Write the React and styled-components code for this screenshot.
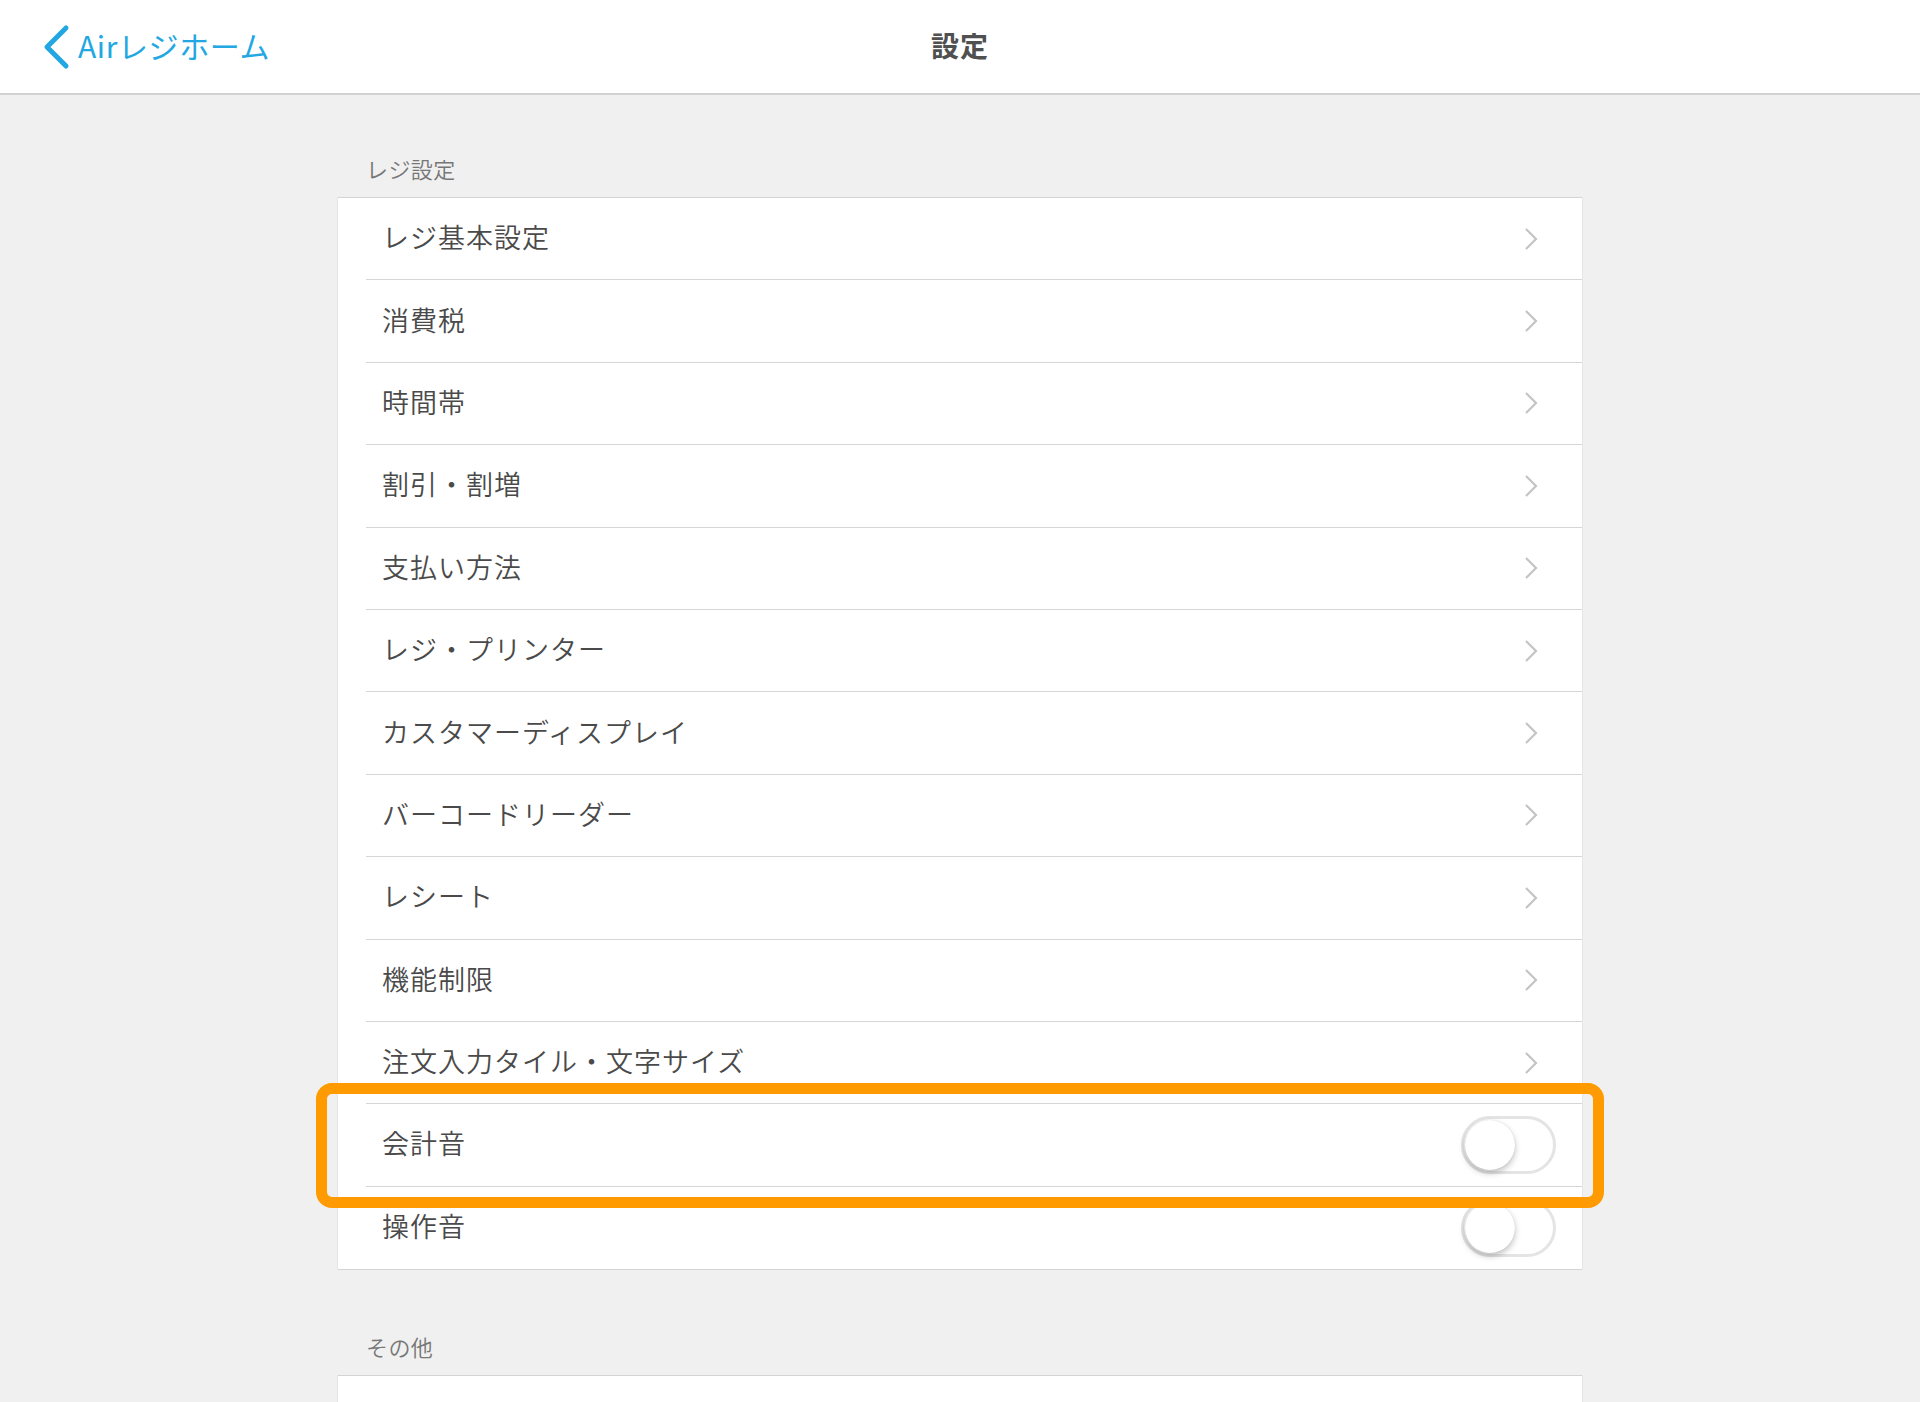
import styled, { createGlobalStyle } from "styled-components";

const GlobalStyle = createGlobalStyle`
  html, body {
    margin: 0;
    padding: 0;
    background: #f0f0f0;
    overflow: hidden;
  }
  body {
    font-family: "Noto Sans CJK JP", "Noto Sans", sans-serif;
  }
`;

const registerItems = [
  { label: "レジ基本設定" },
  { label: "消費税" },
  { label: "時間帯" },
  { label: "割引・割増" },
  { label: "支払い方法" },
  { label: "レジ・プリンター" },
  { label: "カスタマーディスプレイ" },
  { label: "バーコードリーダー" },
  { label: "レシート" },
  { label: "機能制限" },
  { label: "注文入力タイル・文字サイズ" },
  { label: "会計音", toggle: true, highlight: true },
  { label: "操作音", toggle: true },
];

const BackIcon = () => (
  <svg width="30" height="46" viewBox="0 0 30 46">
    <polyline
      points="24,4 5,23 24,42"
      fill="none"
      stroke="#22a7e2"
      strokeWidth="5"
      strokeLinecap="round"
      strokeLinejoin="round"
    />
  </svg>
);

const Chevron = () => (
  <svg width="14" height="24" viewBox="0 0 14 24">
    <polyline
      points="2,2 12,12 2,22"
      fill="none"
      stroke="#c4c4c4"
      strokeWidth="2.2"
    />
  </svg>
);

const App = () => {
  return (
    <>
      <GlobalStyle />
      <Page>
        <Header>
          <BackLink>
            <BackIcon />
            <span>Airレジホーム</span>
          </BackLink>
          <Title>設定</Title>
        </Header>

        <Content>
          <SectionLabel>レジ設定</SectionLabel>
          <Card>
            {registerItems.map((item) => (
              <Row key={item.label}>
                <RowInner>
                  <RowText>{item.label}</RowText>
                  {item.toggle ? (
                    <Toggle>
                      <Knob />
                    </Toggle>
                  ) : (
                    <ChevronBox>
                      <Chevron />
                    </ChevronBox>
                  )}
                </RowInner>
                {item.highlight && <Highlight />}
              </Row>
            ))}
          </Card>

          <SectionLabel $top={61}>その他</SectionLabel>
          <Card>
            <Row>
              <RowInner />
            </Row>
          </Card>
        </Content>
      </Page>
    </>
  );
};

export default App;

const Page = styled.div`
  width: 1920px;
  min-height: 1402px;
  background: #f0f0f0;
`;

const Header = styled.header`
  position: relative;
  height: 93px;
  background: #fff;
  border-bottom: 2px solid #d2d2d2;
  display: flex;
  align-items: center;
  justify-content: center;
`;

const BackLink = styled.div`
  position: absolute;
  left: 42px;
  top: 0;
  bottom: 0;
  display: flex;
  align-items: center;
  gap: 6px;
  color: #22a7e2;
  font-size: 30px;
  letter-spacing: 0.6px;

  svg {
    margin-top: 1px;
  }

  span {
    padding-bottom: 3px;
  }
`;

const Title = styled.h1`
  margin: 0;
  padding-bottom: 4px;
  font-size: 28px;
  font-weight: 700;
  color: #505050;
  letter-spacing: 1px;
`;

const Content = styled.main`
  width: 1244px;
  margin: 0 auto;
  padding-top: 58px;
`;

const SectionLabel = styled.div`
  margin-top: ${(p) => p.$top || 0}px;
  padding-left: 28px;
  height: 30px;
  line-height: 30px;
  padding-bottom: 4px;
  margin-bottom: 10px;
  font-size: 22px;
  font-weight: 350;
  color: #777;
  letter-spacing: 0.4px;
`;

const Card = styled.section`
  background: #fff;
  border-top: 1px solid #d4d4d4;
  border-bottom: 1px solid #d4d4d4;
  box-shadow: -1px 0 0 #e6e6e6, 1px 0 0 #e6e6e6;
`;

const Row = styled.div`
  position: relative;
  padding-left: 28px;
  display: flex;

  &:last-child > div {
    border-bottom: none;
  }
`;

const RowInner = styled.div`
  flex: 1;
  box-sizing: border-box;
  height: 82.4px;
  border-bottom: 1px solid #d6d6d6;
  display: flex;
  align-items: center;
  justify-content: space-between;
  padding-left: 16px;
  padding-right: 26px;
`;

const RowText = styled.span`
  padding-bottom: 4px;
  font-size: 27px;
  font-weight: 350;
  color: #4a4a4a;
  letter-spacing: 1px;
`;

const ChevronBox = styled.span`
  display: flex;
  margin-right: 18px;
`;

const Toggle = styled.span`
  position: relative;
  box-sizing: border-box;
  width: 95px;
  height: 58px;
  border-radius: 29px;
  border: 3px solid #e4e4e4;
  background: #fff;
`;

const Knob = styled.span`
  position: absolute;
  left: 1px;
  top: 1px;
  width: 50px;
  height: 50px;
  border-radius: 50%;
  background: #fff;
  box-shadow: 0 3px 6px rgba(0, 0, 0, 0.25), 0 0 1px rgba(0, 0, 0, 0.15);
`;

const Highlight = styled.div`
  position: absolute;
  top: -21px;
  bottom: -21px;
  left: -22px;
  right: -22px;
  border: 11px solid #ff9a00;
  border-radius: 16px;
  pointer-events: none;
  z-index: 2;
`;
